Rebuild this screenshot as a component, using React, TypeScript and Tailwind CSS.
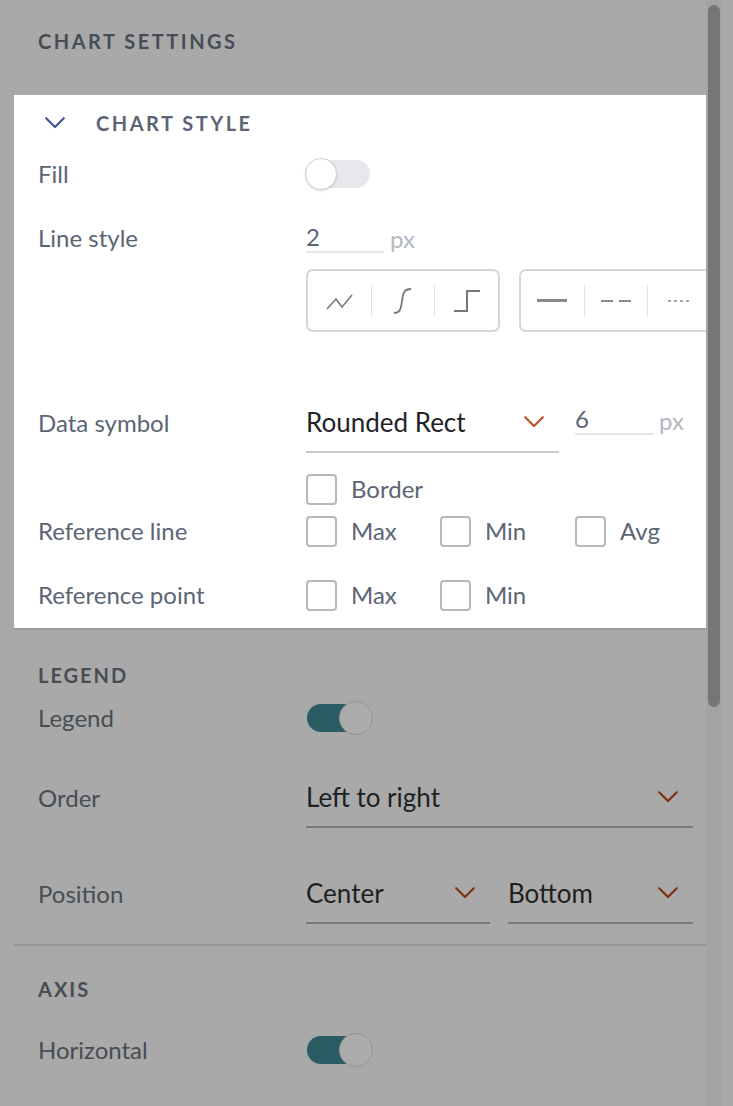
import React from "react";

const F = { fontFamily: "Lato, 'Noto Sans', sans-serif" };

function Chevron({ c, w = 22 }: { c: string; w?: number }) {
  return (
    <svg width={w} height={w * 0.6} viewBox="0 0 20 12" fill="none">
      <path d="M2 2l8 8 8-8" stroke={c} strokeWidth="2" strokeLinecap="round" strokeLinejoin="round" />
    </svg>
  );
}

function Box({ label }: { label: string }) {
  return (
    <div className="flex items-center gap-[14px]">
      <div className="w-[31px] h-[31px] rounded-[4px] border-2 border-[#b8b8b8] bg-white" />
      <span className="text-[24px] text-[#5b6575]">{label}</span>
    </div>
  );
}

function Select({ text, w, dim }: { text: string; w: number; dim?: boolean }) {
  return (
    <div className={`flex items-center justify-between h-[60px] border-b-2 ${dim ? "border-[#7a7a7a]" : "border-[#c8ccd2]"}`} style={{ width: w }}>
      <span className={`text-[26px] ${dim ? "text-[#1f1f1f]" : "text-[#1f2328]"}`}>{text}</span>
      <span className="mr-[14px]"><Chevron c={dim ? "#7d3215" : "#c2502a"} /></span>
    </div>
  );
}

function DimToggle() {
  return (
    <div className="relative w-[64px] h-[28px] rounded-full bg-[#2b5b63]">
      <div className="absolute right-[-2px] top-[-3px] w-[34px] h-[34px] rounded-full bg-[#ababab] border border-[#969696]" />
    </div>
  );
}

export default function App() {
  const dimLabel = "text-[24px] text-[#474d55] w-[268px] shrink-0";
  const label = "text-[24px] text-[#5b6575] w-[268px] shrink-0";
  return (
    <div className="relative w-[733px] h-[1106px] bg-[#a9a9a9] overflow-hidden" style={F}>
      <div className="px-[38px] pt-[26px] h-[95px]">
        <div className="text-[20px] font-bold tracking-[2.5px] text-[#474d55]">CHART SETTINGS</div>
      </div>
      <div className="mx-[14px] w-[694px] h-[533px] bg-white px-[24px]">
        <div className="flex items-center h-[54px] pt-[2px]">
          <span className="ml-[6px] mr-[30px]"><Chevron c="#3d5a8c" /></span>
          <span className="text-[20px] font-bold tracking-[2.5px] text-[#5b6575]">CHART STYLE</span>
        </div>
        <div className="flex items-center h-[50px]">
          <span className={label}>Fill</span>
          <div className="relative w-[64px] h-[28px] rounded-full bg-[#e6e8eb]">
            <div className="absolute left-[-1px] top-[-2px] w-[32px] h-[32px] rounded-full bg-white border border-[#d0d0d0] shadow" />
          </div>
        </div>
        <div className="flex h-[194px] pt-[24px]">
          <span className={`${label} leading-[30px]`}>Line style</span>
          <div>
            <div className="flex items-end h-[30px]">
              <div className="w-[78px] border-b-2 border-[#e3e5e8] text-[24px] text-[#5b6575] leading-[28px]">2</div>
              <span className="ml-[6px] text-[24px] text-[#b3b8c2] leading-[28px]">px</span>
            </div>
            <div className="flex gap-[19px] mt-[16px]">
              <div className="w-[194px] h-[63px] rounded-[7px] border-2 border-[#d4d6da] flex items-center">
                <div className="flex-1 flex justify-center"><svg width="32" height="24" viewBox="0 0 32 24"><path d="M4 20l9-10 6 8 10-12" fill="none" stroke="#777" strokeWidth="1.5" /></svg></div>
                <div className="w-px h-[32px] bg-[#e3e3e3]" />
                <div className="flex-1 flex justify-center"><svg width="24" height="30" viewBox="0 0 24 30"><path d="M3 27c6 0 7-4 8-12s2-12 9-12" fill="none" stroke="#777" strokeWidth="1.8" /></svg></div>
                <div className="w-px h-[32px] bg-[#e3e3e3]" />
                <div className="flex-1 flex justify-center"><svg width="30" height="26" viewBox="0 0 30 26"><path d="M2 23h13V3h13" fill="none" stroke="#777" strokeWidth="2" /></svg></div>
              </div>
              <div className="w-[194px] h-[63px] rounded-[7px] border-2 border-[#d4d6da] flex items-center">
                <div className="flex-1 flex justify-center"><div className="w-[30px] h-[3px] bg-[#888]" /></div>
                <div className="w-px h-[32px] bg-[#e3e3e3]" />
                <div className="flex-1 flex justify-center"><svg width="30" height="4"><path d="M0 2h12M18 2h12" stroke="#888" strokeWidth="2" /></svg></div>
                <div className="w-px h-[32px] bg-[#e3e3e3]" />
                <div className="flex-1 flex justify-center"><svg width="24" height="4"><path d="M0 2h24" stroke="#888" strokeWidth="1.5" strokeDasharray="3 3" /></svg></div>
              </div>
            </div>
          </div>
        </div>
        <div className="flex h-[106px]">
          <span className={`${label} pt-[12px]`}>Data symbol</span>
          <div>
            <div className="flex items-start">
              <Select text="Rounded Rect" w={253} />
              <div className="ml-[16px] flex items-end h-[42px]">
                <div className="w-[79px] border-b-2 border-[#e3e5e8] text-[24px] text-[#5b6575] leading-[28px]">6</div>
                <span className="ml-[5px] text-[24px] text-[#b3b8c2] leading-[28px]">px</span>
              </div>
            </div>
            <div className="mt-[18px]"><Box label="Border" /></div>
          </div>
        </div>
        <div className="flex items-center h-[64px]">
          <span className={label}>Reference line</span>
          <div className="flex">
            <div className="w-[134px]"><Box label="Max" /></div>
            <div className="w-[135px]"><Box label="Min" /></div>
            <Box label="Avg" />
          </div>
        </div>
        <div className="flex items-center h-[64px]">
          <span className={label}>Reference point</span>
          <div className="flex">
            <div className="w-[134px]"><Box label="Max" /></div>
            <Box label="Min" />
          </div>
        </div>
      </div>
      <div className="mx-[14px] h-[2px] bg-[#9a9a9a]" />
      <div className="px-[38px]">
        <div className="h-[88px] pt-[30px] text-[20px] font-bold tracking-[2px] text-[#474d55]">LEGEND</div>
        <div className="flex items-center h-[40px] -mt-[20px]">
          <span className={dimLabel}>Legend</span>
          <div className="ml-[1px]"><DimToggle /></div>
        </div>
        <div className="flex items-center h-[80px] mt-[20px]">
          <span className={dimLabel}>Order</span>
          <Select text="Left to right" w={387} dim />
        </div>
        <div className="flex items-center h-[80px] mt-[16px]">
          <span className={dimLabel}>Position</span>
          <div className="flex gap-[18px]">
            <Select text="Center" w={184} dim />
            <Select text="Bottom" w={185} dim />
          </div>
        </div>
      </div>
      <div className="ml-[14px] w-[706px] h-[2px] bg-[#959595] mt-[10px]" />
      <div className="px-[38px]">
        <div className="h-[72px] pt-[28px] text-[20px] font-bold tracking-[2px] text-[#474d55]">AXIS</div>
        <div className="flex items-center h-[40px] mt-[12px]">
          <span className={dimLabel}>Horizontal</span>
          <div className="ml-[1px]"><DimToggle /></div>
        </div>
      </div>
      <div className="absolute left-[706px] top-0 w-[15px] h-full bg-[#a3a3a3]">
        <div className="mx-auto mt-[5px] w-[12px] h-[702px] rounded-full bg-[#767676]" />
      </div>
    </div>
  );
}
